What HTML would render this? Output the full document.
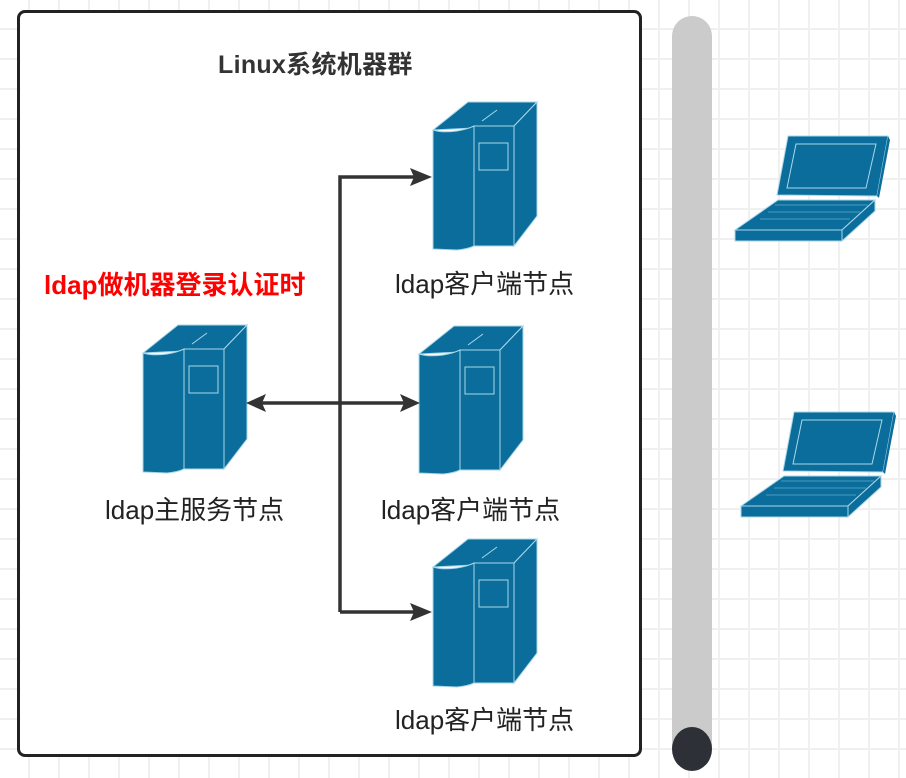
<!DOCTYPE html>
<html><head><meta charset="utf-8"><style>
html,body{margin:0;padding:0}
body{width:906px;height:778px;position:relative;overflow:hidden;background:#fff;
background-image:linear-gradient(#f0f0f0 2px,transparent 2px),linear-gradient(90deg,#f0f0f0 2px,transparent 2px);
background-size:30px 30px;background-position:-2px -2px;font-family:"Liberation Sans","Noto Sans CJK SC",sans-serif}
.box{position:absolute;left:17px;top:10px;width:619px;height:741px;border:3px solid #222;border-radius:8px;background:#fff}
.t{position:absolute;white-space:nowrap;color:#222}
</style></head><body>
<div class="box"></div>
<svg width="906" height="778" style="position:absolute;left:0;top:0">
<defs>
<g id="srv">
<path d="M1,31 L36,3 L105,3 L82,27 Z" fill="#0b6d9b" stroke="#a9d7ea" stroke-width="1"/>
<path d="M82,27 L105,3 L105,117 L82,147 Z" fill="#0b6d9b" stroke="#a9d7ea" stroke-width="1"/>
<path d="M1,31 Q10,34 25,32 Q36,30 42,27 L42,147 Q36,150 25,151 L1,150 Z" fill="#0b6d9b" stroke="#a9d7ea" stroke-width="1"/>
<rect x="42" y="27" width="40" height="120" fill="#0b6d9b" stroke="#a9d7ea" stroke-width="1"/>
<rect x="47" y="44" width="29" height="27" fill="none" stroke="#a9d7ea" stroke-width="1"/>
<path d="M50,22 L65,11" stroke="#a9d7ea" stroke-width="1"/>
</g>
<g id="lap">
<path d="M788,136 L888,136 L877,196 L777,195 Z" fill="#0b6d9b" stroke="#a9d7ea" stroke-width="1"/>
<path d="M796,144 L876,144 L866,188 L787,188 Z" fill="none" stroke="#a9d7ea" stroke-width="1"/>
<path d="M888,136 L890,140 L879,198 L877,196 Z" fill="#0b6d9b"/>
<path d="M735,230 L842,230 L875,200 L778,200 Z" fill="#0b6d9b" stroke="#a9d7ea" stroke-width="1"/>
<path d="M735,230 L842,230 L842,241 L735,241 Z" fill="#0b6d9b" stroke="#a9d7ea" stroke-width="1"/>
<path d="M842,230 L875,200 L875,211 L842,241 Z" fill="#0b6d9b" stroke="#a9d7ea" stroke-width="1"/>
<path d="M760,219 L850,219 M768,212 L860,212 M775,205 L868,205" stroke="#5ea9c9" stroke-width="0.7"/>
</g>
</defs>
<rect x="672" y="16" width="40" height="100" rx="20" fill="#cbcbcb"/>
<rect x="672" y="40" width="40" height="709" fill="#cbcbcb"/>
<ellipse cx="692" cy="749" rx="20" ry="22" fill="#2e3038"/>
<use href="#srv" x="142" y="322"/>
<use href="#srv" x="432" y="99"/>
<use href="#srv" x="418" y="323"/>
<use href="#srv" x="432" y="536"/>
<use href="#lap"/>
<use href="#lap" x="6" y="276"/>
<g stroke="#333" stroke-width="3.5" fill="none">
<path d="M262,403 L404,403"/>
<path d="M340,612 L340,177 L418,177"/>
<path d="M340,612 L418,612"/>
</g>
<g fill="#333">
<path d="M246,403 L266,394 L262,403 L266,412 Z"/>
<path d="M420,403 L400,394 L404,403 L400,412 Z"/>
<path d="M432,177 L410,168 L414,177 L410,186 Z"/>
<path d="M432,612 L410,603 L414,612 L410,621 Z"/>
</g>
</svg>
<div class="t" style="left:218px;top:45px;font-size:25px;font-weight:bold;color:#333;letter-spacing:0.3px">Linux系统机器群</div>
<div class="t" style="left:44px;top:265px;font-size:26px;font-weight:bold;color:#f00">ldap做机器登录认证时</div>
<div class="t" style="left:395px;top:264px;font-size:26px">ldap客户端节点</div>
<div class="t" style="left:105px;top:490px;font-size:26px">ldap主服务节点</div>
<div class="t" style="left:381px;top:490px;font-size:26px">ldap客户端节点</div>
<div class="t" style="left:395px;top:700px;font-size:26px">ldap客户端节点</div>
</body></html>
